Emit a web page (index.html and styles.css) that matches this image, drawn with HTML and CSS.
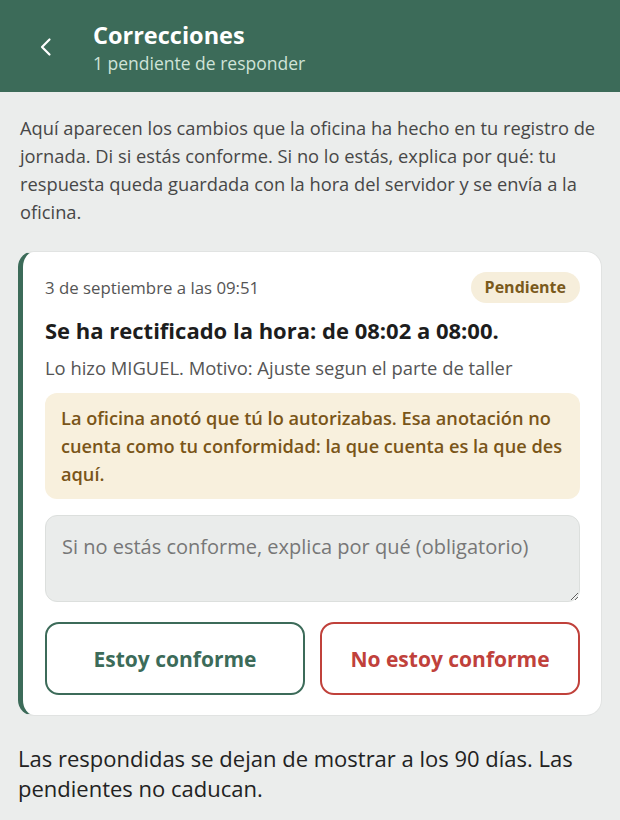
FILE: index.html
```html
<!DOCTYPE html>
<html lang="es">
<head>
    <meta charset="UTF-8">
    <title>Correcciones</title>
    <link rel="stylesheet" href="styles.css">
</head>
<body>
    <div class="header">
        <button class="back" aria-label="Volver">
            <svg width="22" height="22" viewBox="0 0 22 22"><path d="M14.5 3.5 L7 11 L14.5 18.5" fill="none" stroke="#fff" stroke-width="2.2" stroke-linecap="round" stroke-linejoin="round"/></svg>
        </button>
        <div class="header-text">
            <div class="title">Correcciones</div>
            <div class="subtitle">1 pendiente de responder</div>
        </div>
    </div>

    <div class="content">
        <p class="intro">Aquí aparecen los cambios que la oficina ha hecho en tu registro de jornada. Di si estás conforme. Si no lo estás, explica por qué: tu respuesta queda guardada con la hora del servidor y se envía a la oficina.</p>

        <div class="card">
            <div class="card-top">
                <span class="date">3 de septiembre a las 09:51</span>
                <span class="badge">Pendiente</span>
            </div>
            <div class="change">Se ha rectificado la hora: de 08:02 a 08:00.</div>
            <div class="who">Lo hizo MIGUEL. Motivo: Ajuste segun el parte de taller</div>
            <div class="notice">La oficina anotó que tú lo autorizabas. Esa anotación no cuenta como tu conformidad: la que cuenta es la que des aquí.</div>
            <textarea class="reason" placeholder="Si no estás conforme, explica por qué (obligatorio)"></textarea>
            <div class="actions">
                <button class="btn btn-ok">Estoy conforme</button>
                <button class="btn btn-no">No estoy conforme</button>
            </div>
        </div>

        <p class="footnote">Las respondidas se dejan de mostrar a los 90 días. Las pendientes no caducan.</p>
    </div>
</body>
</html>
```

FILE: styles.css
```css
body {
    margin: 0;
    font-family: "Open Sans", "Noto Sans", sans-serif;
    background: #ebedec;
    color: #222;
}
.header {
    background-color: #3c6b59;
    color: #ffffff;
    height: 92px;
    display: flex;
    align-items: flex-start;
    padding: 19px 0 0 34px;
    box-sizing: border-box;
}
.back {
    background: none;
    border: none;
    padding: 0;
    width: 24px;
    height: 24px;
    display: flex;
    align-items: center;
    justify-content: center;
    margin: 16px 35px 0 0;
}
.header-text {
    display: flex;
    flex-direction: column;
}
.title {
    font-size: 23.5px;
    font-weight: bold;
    line-height: 32px;
}
.subtitle {
    font-size: 17.5px;
    color: #cfe3d8;
    line-height: 24px;
}
.content {
    padding: 0 18px;
}
.intro {
    margin: 22px 0 0 2px;
    font-size: 18.3px;
    line-height: 28px;
    color: #474747;
}
.card {
    margin-top: 25px;
    background: #ffffff;
    border: 1px solid #e1e3e2;
    border-left: 5px solid #3c6b59;
    border-radius: 16px;
    padding: 20px 21px 20px 22px;
}
.card-top {
    display: flex;
    justify-content: space-between;
    align-items: center;
}
.date {
    font-size: 16.8px;
    color: #555;
}
.badge {
    background: #f6eedb;
    color: #7a5a1c;
    font-weight: bold;
    font-size: 16px;
    line-height: 31px;
    padding: 0 14px;
    border-radius: 16px;
}
.change {
    font-size: 22px;
    line-height: 28px;
    font-weight: bold;
    color: #1d1d1d;
    margin-top: 13px;
}
.who {
    font-size: 18.4px;
    line-height: 26px;
    color: #555;
    margin-top: 11px;
}
.notice {
    margin-top: 12px;
    background: #f8f0dd;
    color: #7a5518;
    font-size: 18.2px;
    font-weight: 600;
    line-height: 28px;
    padding: 11px 12px 11px 16px;
    border-radius: 12px;
}
.reason {
    display: block;
    width: 100%;
    box-sizing: border-box;
    margin-top: 16px;
    height: 87px;
    background: #eaeceb;
    border: 1px solid #dcdfdd;
    border-radius: 12px;
    padding: 18px 16px;
    font-family: inherit;
    font-size: 20px;
    line-height: 26px;
    color: #333;
    resize: vertical;
}
.reason::placeholder {
    color: #777;
}
.actions {
    display: flex;
    gap: 15px;
    margin-top: 20px;
}
.btn {
    flex: 1;
    height: 73px;
    background: #ffffff;
    border-radius: 14px;
    font-family: inherit;
    font-size: 21px;
    font-weight: bold;
    cursor: pointer;
}
.btn-ok {
    border: 2px solid #3c6b59;
    color: #3c6b59;
}
.btn-no {
    border: 2px solid #c0413b;
    color: #c0413b;
}
.footnote {
    margin: 27px 0 0;
    font-size: 22px;
    line-height: 30px;
    color: #222;
}
```
